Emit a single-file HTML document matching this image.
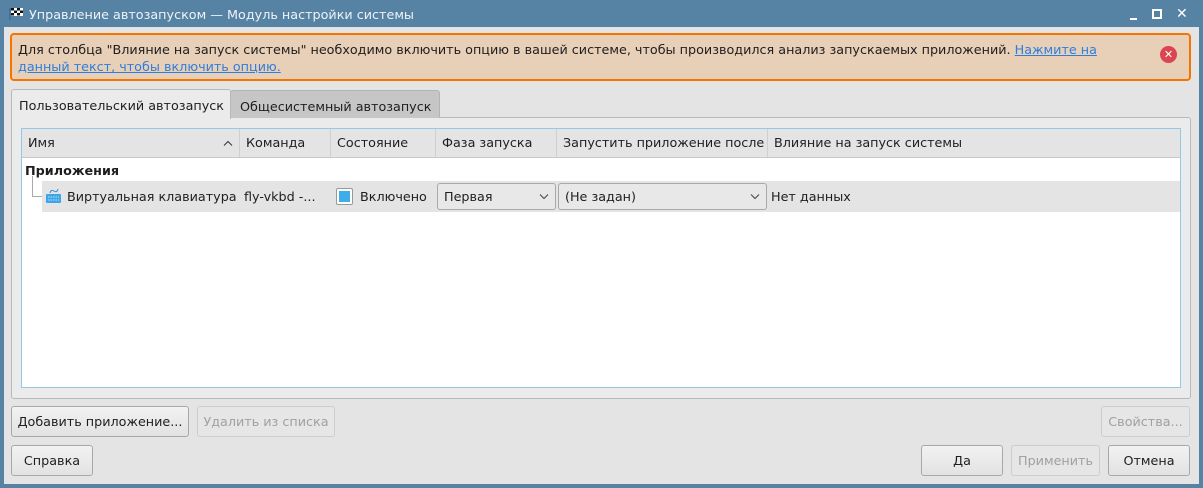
<!DOCTYPE html>
<html><head><meta charset="utf-8"><style>
*{box-sizing:border-box;margin:0;padding:0}
body{width:1203px;height:488px;background:#5682a3;font-family:"DejaVu Sans","Liberation Sans",sans-serif;font-size:12.75px;color:#1e1e1e;position:relative;overflow:hidden}
.a{position:absolute;white-space:nowrap}
.win{position:absolute;left:4px;top:27px;width:1195px;height:457px;background:#e4e4e4}
.btn{position:absolute;height:31px;border:1px solid #a8a8a8;border-radius:3px;background:linear-gradient(#f2f2f2,#e2e2e2);text-align:center;line-height:31px}
.dis{color:#a0a0a0;border-color:#cdcdcd;background:#e6e6e6}
.hd{position:absolute;top:0;height:28px;line-height:30px;padding-left:6px;border-right:1px solid #cfcfcf}
.cb{position:absolute;top:183px;height:27px;border:1px solid #a9a9a9;border-radius:3px;background:#e8e8e8;line-height:27px;padding-left:6px}
.chev{position:absolute;right:6px;top:10px}
</style></head><body>
<svg class="a" style="left:8px;top:6px" width="16" height="15" viewBox="0 0 16 15"><path d="M2 2 L2 14" stroke="#3d6fa0" stroke-width="1.5"/><rect x="3" y="2" width="12" height="8" fill="#fff"/><rect x="3" y="2" width="3" height="2.5" fill="#111"/><rect x="9" y="2" width="3" height="2.5" fill="#111"/><rect x="6" y="4.5" width="3" height="2.5" fill="#111"/><rect x="12" y="4.5" width="3" height="2.5" fill="#111"/><rect x="3" y="7" width="3" height="2.5" fill="#111"/><rect x="9" y="7" width="3" height="2.5" fill="#111"/></svg>
<div class="a" style="left:29px;top:8px;color:#eef3f8">Управление автозапуском — Модуль настройки системы</div>
<div class="a" style="left:1130px;top:18px;width:7px;height:2px;background:#fff"></div>
<div class="a" style="left:1152px;top:9px;width:10px;height:10px;border:2px solid #fff"></div>
<div class="a" style="left:1176px;top:6px;color:#fff;font-size:14px">✕</div>
<div class="win"></div>
<div class="a" style="left:10px;top:33px;width:1181px;height:48px;border:2px solid #f67400;border-radius:4px;background:#e8cfb8"></div>
<div class="a" style="left:18px;top:43px">Для столбца "Влияние на запуск системы" необходимо включить опцию в вашей системе, чтобы производился анализ запускаемых приложений. <span style="color:#2a7fe0;text-decoration:underline">Нажмите на</span></div>
<div class="a" style="left:18px;top:60px;color:#2a7fe0;text-decoration:underline">данный текст, чтобы включить опцию.</div>
<div class="a" style="left:1160px;top:46px;width:17px;height:17px;border-radius:50%;background:#da4453;color:#fff;font-size:11px;text-align:center;line-height:17px;font-weight:bold">✕</div>
<div class="a" style="left:11px;top:117px;width:1180px;height:282px;border:1px solid #b8b8b8;border-radius:3px;background:#ebebeb"></div>
<div class="a" style="left:230px;top:90px;width:210px;height:28px;background:#c6c6c6;border:1px solid #b4b4b4;border-bottom:none;border-radius:3px 3px 0 0;padding:9px 0 0 9px">Общесистемный автозапуск</div>
<div class="a" style="left:11px;top:89px;width:220px;height:30px;background:#ebebeb;border:1px solid #b8b8b8;border-bottom:none;border-radius:3px 3px 0 0;padding:9px 0 0 7px">Пользовательский автозапуск</div>
<div class="a" style="left:21px;top:128px;width:1160px;height:260px;border:1px solid #93c8e8;background:#fff">
 <div class="a" style="left:0;top:0;width:1158px;height:29px;background:#e4e4e4;border-bottom:1px solid #c8c8c8"></div>
 <div class="hd" style="left:0;width:218px">Имя<svg style="position:absolute;right:6px;top:11px" width="10" height="6"><path d="M1 5.5L5 1.5L9 5.5" stroke="#333" fill="none"/></svg></div>
 <div class="hd" style="left:218px;width:91px">Команда</div>
 <div class="hd" style="left:309px;width:105px">Состояние</div>
 <div class="hd" style="left:414px;width:121px">Фаза запуска</div>
 <div class="hd" style="left:535px;width:211px">Запустить приложение после</div>
 <div class="hd" style="left:746px;border:none">Влияние на запуск системы</div>
 <div class="a" style="left:3px;top:35px;font-weight:bold">Приложения</div>
 <div class="a" style="left:20px;top:52px;width:1138px;height:31px;background:#e4e4e4"></div>
 <div class="a" style="left:10px;top:47px;width:10px;height:21px;border-left:1px solid #aaa;border-bottom:1px solid #aaa"></div>
</div>
<svg class="a" style="left:45px;top:188px" width="17" height="16" viewBox="0 0 17 16"><path d="M5 5 Q6 1 9 3 Q12 5 13 1" stroke="#3a8fd0" fill="none"/><rect x="1" y="6" width="15" height="9" rx="1" fill="#3da6e8"/><path d="M3 9h11M3 12h11" stroke="#bfe2fa" stroke-dasharray="1.5 1"/></svg>
<div class="a" style="left:67px;top:190px">Виртуальная клавиатура</div>
<div class="a" style="left:244px;top:190px">fly-vkbd -...</div>
<div class="a" style="left:336px;top:188px;width:17px;height:17px;border:1px solid #999;border-radius:2px;background:#fff;padding:2px"><div style="width:11px;height:11px;background:#3daee9"></div></div>
<div class="a" style="left:360px;top:190px">Включено</div>
<div class="cb" style="left:437px;width:119px">Первая<svg class="chev" width="10" height="6"><path d="M1 0.5L5 4.5L9 0.5" stroke="#444" fill="none"/></svg></div>
<div class="cb" style="left:558px;width:209px">(Не задан)<svg class="chev" width="10" height="6"><path d="M1 0.5L5 4.5L9 0.5" stroke="#444" fill="none"/></svg></div>
<div class="a" style="left:771px;top:190px">Нет данных</div>
<div class="btn" style="left:11px;top:406px;width:178px">Добавить приложение...</div>
<div class="btn dis" style="left:197px;top:406px;width:138px">Удалить из списка</div>
<div class="btn dis" style="left:1101px;top:406px;width:89px">Свойства...</div>
<div class="btn" style="left:11px;top:445px;width:82px">Справка</div>
<div class="btn" style="left:921px;top:445px;width:82px">Да</div>
<div class="btn dis" style="left:1011px;top:445px;width:89px">Применить</div>
<div class="btn" style="left:1108px;top:445px;width:82px">Отмена</div>
</body></html>
